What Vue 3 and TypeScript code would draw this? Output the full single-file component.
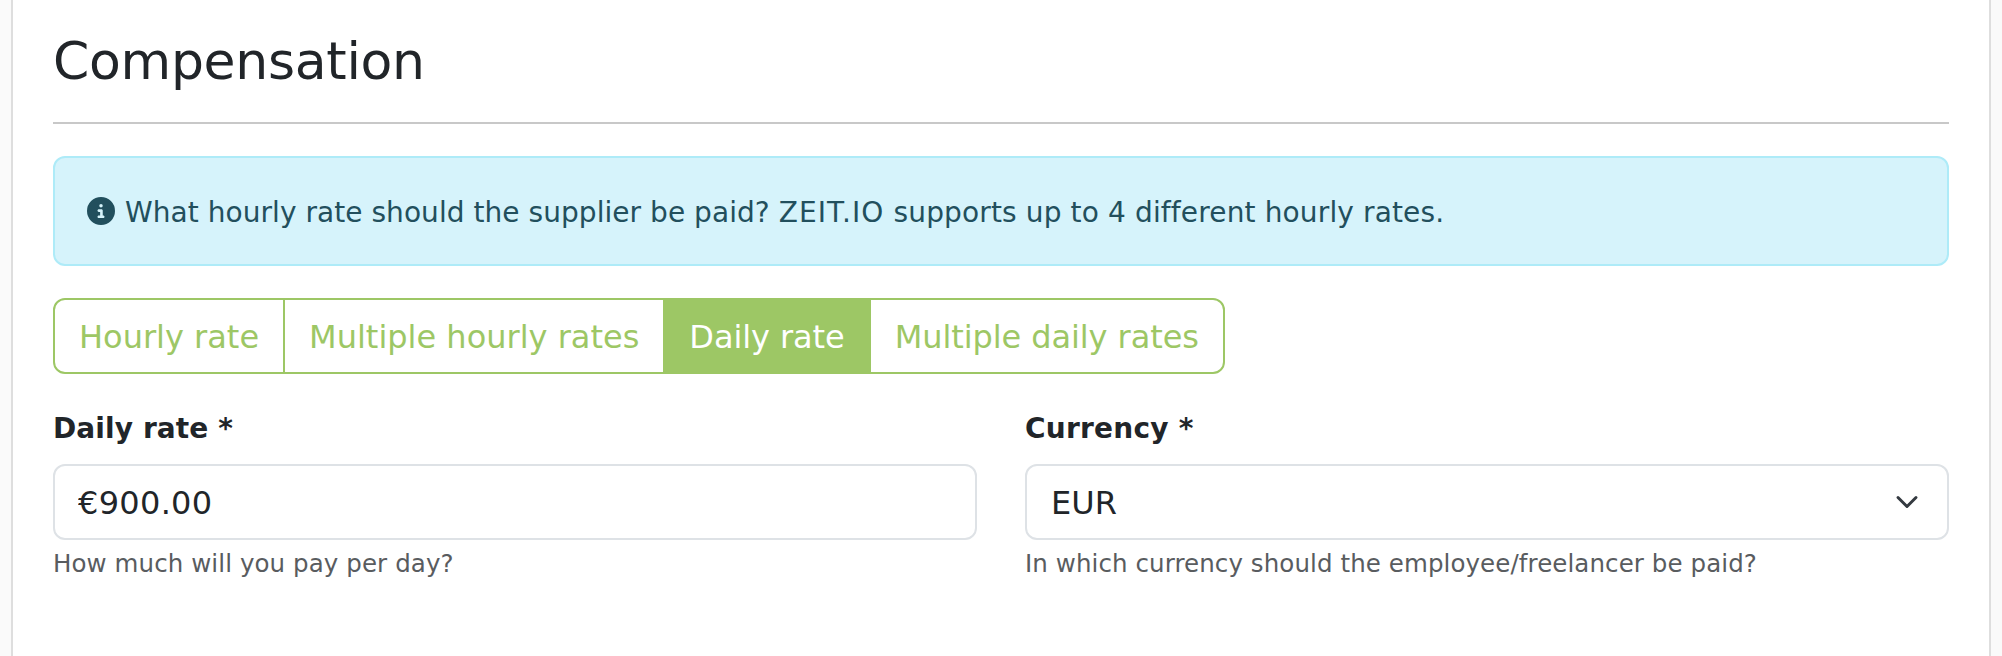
<script setup lang="ts">
import { ref } from 'vue'

const rateTypes: string[] = ['Hourly rate', 'Multiple hourly rates', 'Daily rate', 'Multiple daily rates']
const selected = ref<string>('Daily rate')
const amount = ref<string>('€900.00')
const currency = ref<string>('EUR')
</script>

<template>
  <main class="panel">
    <h2 class="title">Compensation</h2>
    <hr class="rule" />
    <div class="alert">
      <svg class="info" viewBox="0 0 512 512" aria-hidden="true">
        <path fill="currentColor" d="M256 512A256 256 0 1 0 256 0a256 256 0 1 0 0 512zM216 336h24V272H216c-13.3 0-24-10.7-24-24s10.700-24 24-24h48c13.300 0 24 10.700 24 24v88h8c13.300 0 24 10.700 24 24s-10.700 24-24 24H216c-13.300 0-24-10.700-24-24s10.700-24 24-24zm40-208a32 32 0 1 1 0 64 32 32 0 1 1 0-64z" />
      </svg>
      <span class="alert-text">What hourly rate should the supplier be paid? <span class="brand">ZEIT.IO</span><span class="tail"> supports up to 4 different hourly rates.</span></span>
    </div>
    <div class="group" role="group">
      <button
        v-for="type in rateTypes"
        :key="type"
        type="button"
        class="option"
        :class="{ active: type === selected }"
        @click="selected = type"
      >{{ type }}</button>
    </div>
    <div class="fields">
      <div class="field">
        <label class="label" for="rate">Daily rate *</label>
        <input id="rate" v-model="amount" class="control amount" type="text" />
        <div class="help">How much will you pay per day?</div>
      </div>
      <div class="field">
        <label class="label currency-label" for="currency">Currency *</label>
        <div class="select">
          <select id="currency" v-model="currency" class="control">
            <option>EUR</option>
          </select>
          <svg class="chevron" viewBox="0 0 16 16" aria-hidden="true">
            <path fill="none" stroke="#343a40" stroke-linecap="round" stroke-linejoin="round" stroke-width="2" d="m2 5 6 6 6-6" />
          </svg>
        </div>
        <div class="help">In which currency should the employee/freelancer be paid?</div>
      </div>
    </div>
  </main>
</template>

<style>
body {
  margin: 0;
  background: #fafafa;
  overflow: hidden;
}
</style>

<style scoped>
.panel {
  box-sizing: border-box;
  height: 656px;
  margin: 0 11px;
  padding: 30px 40px 0;
  border: solid #dedede;
  border-width: 0 2px;
  background: #fff;
  color: #212529;
  font-family: Verdana, "DejaVu Sans", sans-serif;
  font-size: 28px;
}
.title {
  margin: 0;
  height: 92px;
  font-size: 52px;
  font-weight: 400;
  letter-spacing: -0.3px;
  line-height: 62px;
}
.rule {
  margin: 0 0 32px;
  border: 0;
  height: 2px;
  background: #c8c8c8;
}
.alert {
  box-sizing: border-box;
  display: flex;
  align-items: center;
  height: 110px;
  margin-bottom: 32px;
  padding: 0 32px;
  border: 2px solid #aeebf8;
  border-radius: 12px;
  background: #d6f3fb;
  color: #224f5d;
}
.info {
  width: 28px;
  height: 28px;
  margin-right: 10px;
}
.alert-text {
  padding-top: 2px;
  letter-spacing: 0.05px;
  white-space: nowrap;
}
.brand {
  letter-spacing: 1.1px;
}
.tail {
  letter-spacing: 0.14px;
}
.group {
  display: flex;
  width: 1172px;
  margin-bottom: 32px;
}
.option {
  box-sizing: border-box;
  height: 76px;
  margin: 0 0 0 -2px;
  padding: 1px 24px 0;
  border: 2px solid #9dc765;
  background: #fff;
  color: #9dc765;
  font: inherit;
  font-size: 32px;
  white-space: nowrap;
}
.option:first-child {
  margin-left: 0;
  border-radius: 12px 0 0 12px;
}
.option:last-child {
  border-radius: 0 12px 12px 0;
  letter-spacing: -0.08px;
}
.option.active {
  background: #9dc765;
  color: #fff;
  letter-spacing: -0.08px;
}
.fields {
  display: grid;
  grid-template-columns: 1fr 1fr;
  gap: 48px;
}
.label {
  display: block;
  box-sizing: border-box;
  height: 42px;
  margin-bottom: 16px;
  padding-top: 2px;
  font-weight: 700;
  letter-spacing: 0.1px;
  line-height: 42px;
}
.currency-label {
  letter-spacing: 0.25px;
}
.control {
  display: block;
  box-sizing: border-box;
  width: 100%;
  height: 76px;
  padding: 1px 24px 0;
  border: 2px solid #dee2e6;
  border-radius: 12px;
  outline: 0;
  appearance: none;
  background: #fff;
  color: #212529;
  font: inherit;
  font-size: 32px;
}
.amount {
  padding-left: 23px;
  letter-spacing: 0.3px;
}
.select {
  position: relative;
}
.chevron {
  position: absolute;
  top: 26px;
  right: 30px;
  width: 24px;
  height: 24px;
  pointer-events: none;
}
.help {
  margin-top: 8px;
  color: #595c5f;
  font-size: 24.5px;
  letter-spacing: 0.09px;
  line-height: 32px;
  white-space: nowrap;
}
</style>
